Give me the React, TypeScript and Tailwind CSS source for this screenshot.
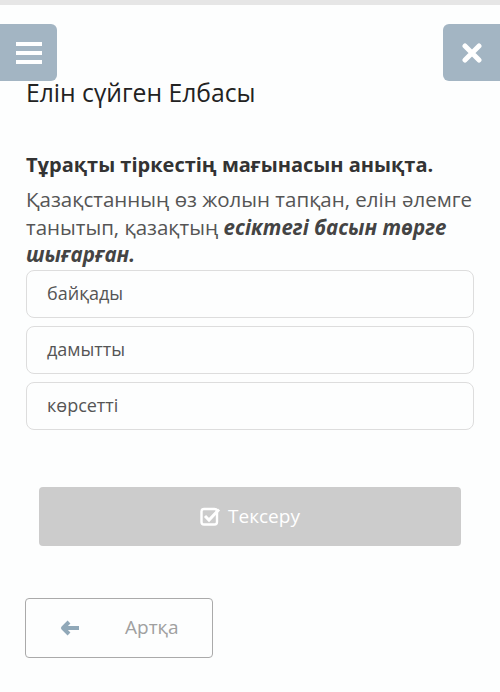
import React from "react";

export default function App() {
  return (
    <div className="w-[500px] h-[692px] bg-[#fdfefe] relative overflow-hidden" style={{ fontFamily: '"Open Sans", "Noto Sans", sans-serif' }}>
      <div className="h-[5px] bg-[#e6e6e6]" />
      <div className="flex justify-between mt-[19px]">
        <div className="w-[57px] h-[57px] bg-[#a3b5c3] rounded-r-[6px] flex flex-col items-center justify-center gap-[5px]">
          <div className="w-[26px] h-[4px] bg-white" />
          <div className="w-[26px] h-[4px] bg-white" />
          <div className="w-[26px] h-[4px] bg-white" />
        </div>
        <div className="w-[57px] h-[57px] bg-[#a3b5c3] rounded-l-[6px] flex items-center justify-center">
          <svg width="20" height="20" viewBox="0 0 20 20">
            <path d="M3 3 L17 17 M17 3 L3 17" stroke="white" strokeWidth="5" strokeLinecap="round" />
          </svg>
        </div>
      </div>
      <div className="px-[26px]">
        <h1 className="text-[24.7px] leading-[30px] text-[#222] font-normal -mt-[3px]">Елін сүйген Елбасы</h1>
        <p className="mt-[45px] text-[20px] leading-[24px] font-bold text-[#333]">Тұрақты тіркестің мағынасын анықта.</p>
        <p className="mt-[9px] text-[20.5px] leading-[27.5px] text-[#555]">
          Қазақстанның өз жолын тапқан, елін әлемге танытып, қазақтың <b className="italic text-[#444]">есіктегі басын төрге шығарған.</b>
        </p>
        <div className="flex flex-col gap-[8px] mt-[1px]">
          {["байқады", "дамытты", "көрсетті"].map((t) => (
            <div key={t} className="h-[48px] border border-[#ddd] rounded-[8px] flex items-center pl-[20px] text-[18px] text-[#555]">
              {t}
            </div>
          ))}
        </div>
      </div>
      <div className="px-[39px] mt-[57px]">
        <div className="h-[59px] bg-[#cccccc] rounded-[4px] flex items-center justify-center gap-[7px] text-white text-[19px]">
          <svg className="shrink-0" width="21" height="20" viewBox="0 0 21 20">
            <rect x="1.5" y="3" width="15.5" height="15.5" rx="2.5" fill="none" stroke="white" strokeWidth="2.4" />
            <path d="M5 10 L9 14 L19 3.5" fill="none" stroke="white" strokeWidth="3" />
          </svg>
          Тексеру
        </div>
      </div>
      <div className="px-[25px] mt-[52px]">
        <div className="w-[188px] h-[60px] border border-[#aaa] rounded-[4px] flex items-center text-[19px] text-[#a0a0a0]">
          <svg className="ml-[34px]" width="20" height="16" viewBox="0 0 20 16">
            <path d="M9 2 L3 8 L9 14 M3 8 L19 8" fill="none" stroke="#90a8b8" strokeWidth="4" strokeLinejoin="round" />
          </svg>
          <span className="ml-[45px]">Артқа</span>
        </div>
      </div>
    </div>
  );
}
